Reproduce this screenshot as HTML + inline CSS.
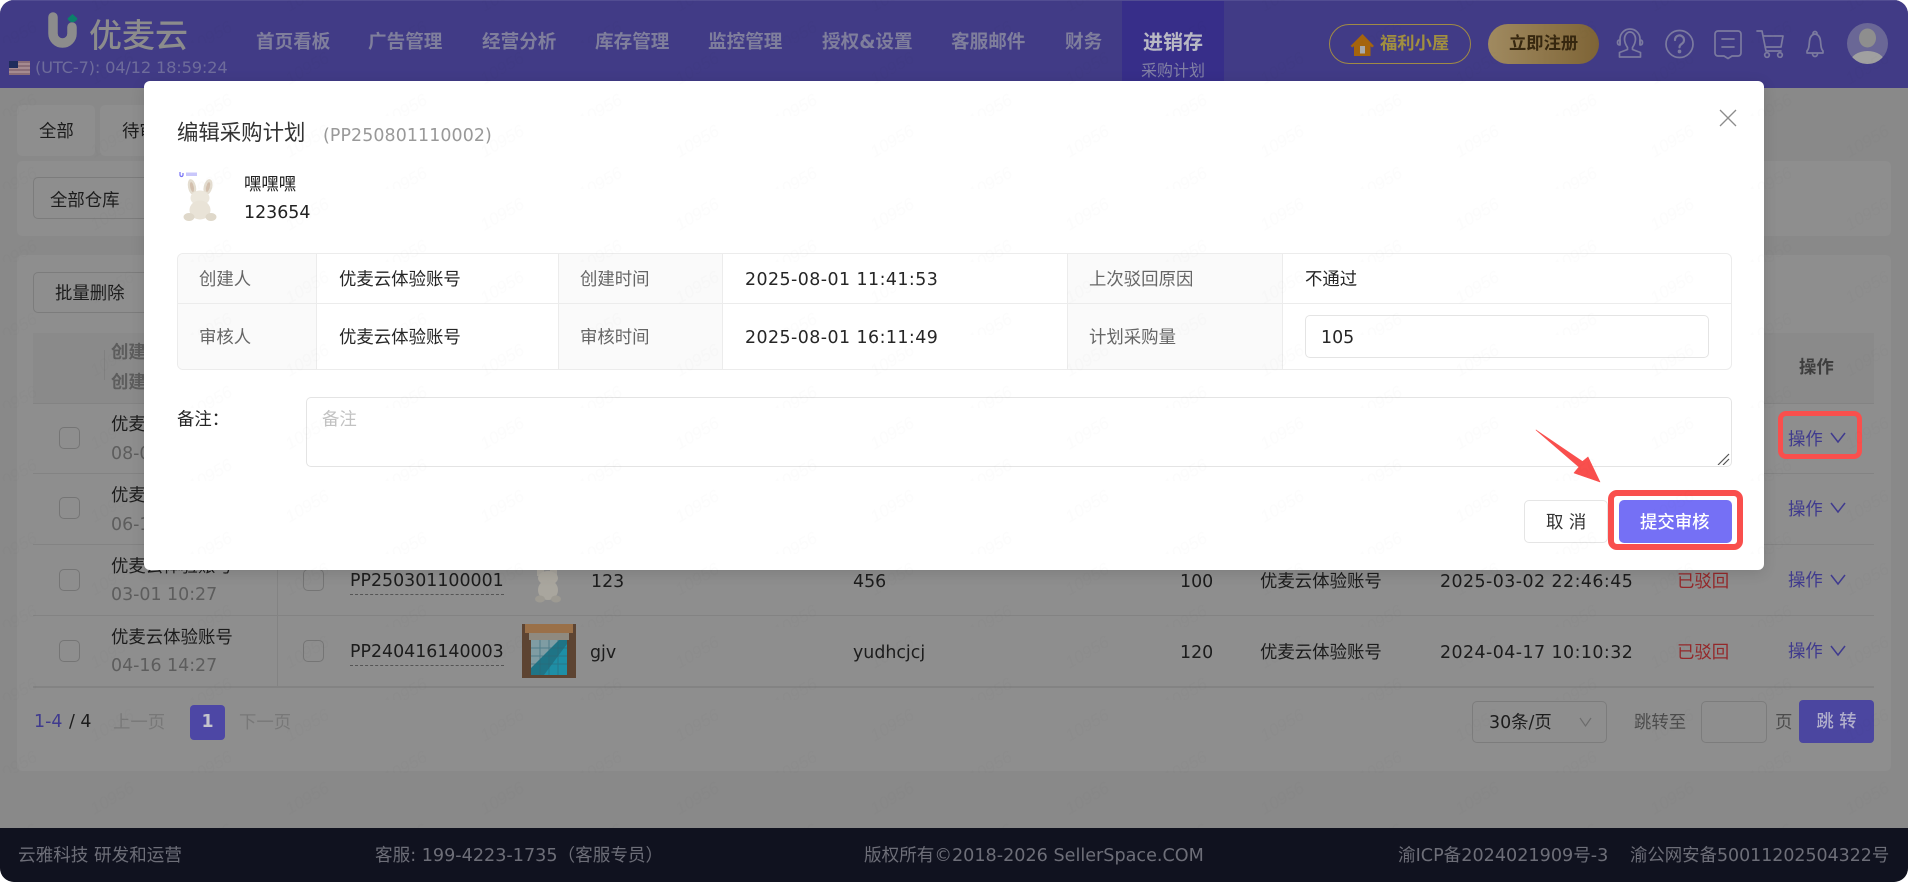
<!DOCTYPE html>
<html lang="zh"><head><meta charset="utf-8"><title>编辑采购计划</title>
<style>
*{box-sizing:border-box}
html,body{margin:0;padding:0;width:1908px;height:882px;overflow:hidden;background:#fff}
body{font-family:"DejaVu Sans","Noto Sans CJK SC",sans-serif;font-size:17.4px;color:#1c1c1c}
#app{position:absolute;left:0;top:0;width:1908px;height:882px;border-radius:14px;overflow:hidden;background:#898989}
.t{position:absolute;white-space:nowrap;line-height:30px;height:30px}
.b{position:absolute}
#hd{position:absolute;left:0;top:0;width:1908px;height:88px;background:#413b86;border-top:1px solid #524d92}
#ft{position:absolute;left:0;top:828px;width:1908px;height:54px;background:#10121f}
.nav{color:#7f7e9c;font-size:18.6px;font-weight:700;top:27px}
.ft{color:#6d6e78;font-size:17.6px;top:13px}
.card{position:absolute;background:#8e8e8e;border-radius:5px}
.bx{position:absolute;border:1px solid #7c7c7c;border-radius:5px}
.line{position:absolute;height:1px;background:#838383;left:33px;width:1841px}
.ck{position:absolute;width:21px;height:22px;border:1px solid #757575;border-radius:5px}
.g{color:#5d5d5d}
.r{color:#94282a}
.p{color:#3f3a8e}
.pp{border-bottom:1px dashed #555;line-height:32px;height:30px}
#m{position:absolute;left:144px;top:81px;width:1620px;height:489px;background:#fff;border-radius:6px;box-shadow:0 3px 14px rgba(0,0,0,.12)}
#m .t{color:#262626}
.cell{position:absolute;background:#fafafa;border-right:1px solid #ececec}
.lb{color:#666!important}
.in{position:absolute;background:#fff;border:1px solid #e4e4e4;border-radius:5px}
#wm{position:absolute;left:0;top:0;pointer-events:none}
</style></head><body>
<div id="app">

<!-- header -->
<div id="hd">
 <svg class="b" style="left:44px;top:10px" width="40" height="40" viewBox="44 11 40 40">
  <path d="M53 17V33.5a9.5 9.5 0 0 0 19 0V27" fill="none" stroke="#8c8c8c" stroke-width="9.5" stroke-linecap="round"/>
  <path d="M72.500 14l5 4.500a5.200 5.200 0 0 1-10 0z" fill="#0b7f6a"/>
 </svg>
 <div class="t" style="left:89px;top:20px;font-size:33px;font-weight:500;color:#8c8c8c;line-height:30px">优麦云</div>
 <svg class="b" style="left:9px;top:60px" width="21" height="14" viewBox="0 0 21 14">
  <rect width="21" height="14" fill="#8a6d78"/><rect y="2" width="21" height="2" fill="#a58a90"/><rect y="6" width="21" height="2" fill="#a58a90"/><rect y="10" width="21" height="2" fill="#a58a90"/><rect width="9" height="7" fill="#1f2c5c"/>
 </svg>
 <div class="t" style="left:35px;top:52px;font-size:16.3px;color:#6e6c9b;letter-spacing:-.2px">(UTC-7): 04/12 18:59:24</div>

 <div class="t nav" style="left:256px">首页看板</div>
 <div class="t nav" style="left:368px">广告管理</div>
 <div class="t nav" style="left:482px">经营分析</div>
 <div class="t nav" style="left:595px">库存管理</div>
 <div class="t nav" style="left:708px">监控管理</div>
 <div class="t nav" style="left:822px">授权&amp;设置</div>
 <div class="t nav" style="left:951px">客服邮件</div>
 <div class="t nav" style="left:1065px">财务</div>
 <div class="b" style="left:1122px;top:0;width:102px;height:87px;background:#372e89"></div>
 <div class="t" style="left:1143px;top:26px;font-size:20px;font-weight:700;color:#b9b9c4">进销存</div>
 <div class="t" style="left:1141px;top:55px;font-size:16px;color:#8280a4">采购计划</div>

 <div class="b" style="left:1329px;top:23px;width:142px;height:40px;border:1px solid #a08a45;border-radius:20px"></div>
 <svg class="b" style="left:1350px;top:32px" width="25" height="24" viewBox="0 0 25 24">
  <path d="M12.500 1L24 13l-2 1.500-1.500-1.500V23H4V13l-1.500 1.500L.5 13z" fill="#a5640c"/><rect x="10" y="13" width="5" height="7.500" fill="#a9a9a9"/>
 </svg>
 <div class="t" style="left:1380px;top:28px;font-size:17.3px;font-weight:700;color:#a18f3f">福利小屋</div>
 <div class="b" style="left:1488px;top:23px;width:111px;height:40px;border-radius:20px;background:linear-gradient(90deg,#a08a60,#7e6436)"></div>
 <div class="t" style="left:1509px;top:28px;font-size:17.3px;font-weight:700;color:#36270f">立即注册</div>

 <svg class="b" style="left:1610px;top:20px" width="240" height="44" viewBox="1610 21 240 44" fill="none" stroke="#7b7a9f" stroke-width="1.700" stroke-linecap="round" stroke-linejoin="round">
  <path d="M1620 44V39a10 10 0 0 1 20 0v5"/><path d="M1620 40c-2 0-2.500 1-2.500 2.500s.5 2.500 2.500 2.500zM1640 40c2 0 2.500 1 2.500 2.500s-.5 2.500-2.500 2.500z"/>
  <path d="M1624.500 39a5.500 7 0 0 1 11 0c0 4-2 7-3 8.500v2l8 3V57h-21v-4.500l8-3v-2c-1-1.500-3-4.500-3-8.500z"/>
  <circle cx="1679.500" cy="44" r="13.500"/><path d="M1675 40a4.500 4.500 0 1 1 7 3.700c-1.500 1-2.500 1.800-2.500 3.600" stroke-width="2.200"/><circle cx="1679.500" cy="51.500" r="1" fill="#7b7a9f"/>
  <path d="M1718 31h20a3 3 0 0 1 3 3v19a3 3 0 0 1-3 3h-6l-4 2.500-4-2.500h-6a3 3 0 0 1-3-3V34a3 3 0 0 1 3-3z"/><path d="M1722 39h12M1722 47h12"/>
  <path d="M1757 31h5l4 20h15M1763 36h20l-2 11h-16"/><circle cx="1767" cy="55" r="2.300"/><circle cx="1780" cy="55" r="2.300"/>
  <path d="M1807 53v-2c2-2 2-5 2.500-10 .4-4 2-6.500 5.500-7 3.500.5 5.100 3 5.500 7 .5 5 .5 8 2.500 10v2z"/><path d="M1812.500 53.500c0 4 5 4 5 0M1813 33.500a2 2 0 0 1 4 0"/>
 </svg>
 <svg class="b" style="left:1847px;top:22px" width="41" height="41" viewBox="0 0 41 41">
  <defs><clipPath id="av"><circle cx="20.500" cy="20.500" r="20.500"/></clipPath></defs>
  <g clip-path="url(#av)"><rect width="41" height="41" fill="#6a6796"/><ellipse cx="20.500" cy="15" rx="8.500" ry="9.500" fill="#8e8e8e"/><ellipse cx="20.500" cy="39" rx="17" ry="11" fill="#a0a0a0"/></g>
 </svg>
</div>

<!-- page behind overlay -->
<div class="card" style="left:17px;top:105px;width:78px;height:51px"></div>
<div class="card" style="left:100px;top:105px;width:80px;height:51px"></div>
<div class="t" style="left:39px;top:117px">全部</div>
<div class="t" style="left:122px;top:117px">待审</div>
<div class="card" style="left:17px;top:161px;width:1874px;height:75px"></div>
<div class="bx" style="left:33px;top:177px;width:140px;height:42px"></div>
<div class="t" style="left:50px;top:186px">全部仓库</div>
<div class="card" style="left:17px;top:255px;width:1874px;height:516px"></div>
<div class="bx" style="left:33px;top:272px;width:120px;height:41px"></div>
<div class="t" style="left:55px;top:279px">批量删除</div>

<div class="b" style="left:33px;top:333px;width:1841px;height:70px;background:#8a8a8a"></div>
<div class="b" style="left:104px;top:350px;width:1px;height:30px;background:#808080"></div>
<div class="t g" style="left:111px;top:338px;font-weight:700">创建人</div>
<div class="t g" style="left:111px;top:368px;font-weight:700">创建时间</div>
<div class="t" style="left:1799px;top:353px;font-weight:700;color:#3e3e3e">操作</div>

<div class="line" style="top:403px"></div>
<div class="line" style="top:473px"></div>
<div class="line" style="top:544px"></div>
<div class="line" style="top:615px"></div>
<div class="line" style="top:686px;height:2px"></div>
<div class="b" style="left:277px;top:403px;width:1px;height:284px;background:#838383"></div>

<div class="ck" style="left:59px;top:427px"></div><div class="t" style="left:111px;top:410px">优麦云体验账号</div><div class="t g" style="left:111px;top:439px">08-01 11:41</div>
<div class="ck" style="left:59px;top:497px"></div><div class="t" style="left:111px;top:481px">优麦云体验账号</div><div class="t g" style="left:111px;top:510px">06-10 09:12</div>
<div class="ck" style="left:59px;top:569px"></div><div class="t" style="left:111px;top:552px">优麦云体验账号</div><div class="t g" style="left:111px;top:580px">03-01 10:27</div>
<div class="ck" style="left:59px;top:640px"></div><div class="t" style="left:111px;top:623px">优麦云体验账号</div><div class="t g" style="left:111px;top:651px">04-16 14:27</div>

<div class="ck" style="left:303px;top:569px"></div>
<div class="t pp" style="left:350px;top:565px">PP250301100001</div>
<svg class="b" style="left:530px;top:570px" width="38" height="33" viewBox="0 0 38 33"><rect x="7" y="0" width="7" height="6" fill="#a5a29b"/><rect x="20" y="0" width="7" height="6" fill="#a5a29b"/><ellipse cx="18" cy="8" rx="10" ry="7" fill="#aaa79f"/><ellipse cx="18" cy="20" rx="10" ry="10" fill="#a9a69e"/><ellipse cx="10" cy="29" rx="5" ry="3.500" fill="#9d9a92"/><ellipse cx="26" cy="29" rx="5" ry="3.500" fill="#9d9a92"/></svg>
<div class="t" style="left:591px;top:567px">123</div>
<div class="t" style="left:853px;top:567px">456</div>
<div class="t" style="left:1180px;top:567px">100</div>
<div class="t" style="left:1260px;top:567px">优麦云体验账号</div>
<div class="t" style="left:1440px;top:567px;letter-spacing:.45px">2025-03-02 22:46:45</div>
<div class="t r" style="left:1677px;top:567px">已驳回</div>

<div class="ck" style="left:303px;top:640px"></div>
<div class="t pp" style="left:350px;top:636px">PP240416140003</div>
<svg class="b" style="left:522px;top:624px" width="54" height="54" viewBox="0 0 54 54">
 <rect width="54" height="54" fill="#5d4432"/><rect x="3" y="0" width="48" height="9" fill="#9a7048"/><rect x="7" y="9" width="40" height="7" fill="#8f8a7f"/>
 <rect x="9" y="16" width="36" height="35" fill="#1f7486"/><path d="M9 16h28L9 44z" fill="#7f9ca3"/><path d="M22 51L45 20v31z" fill="#1e8fa6"/>
 <path d="M9 24H45M9 32H45M9 40H45M18 16V51M27 16V51M36 16V51" stroke="#2f6574" stroke-width="1" opacity=".55"/>
</svg>
<div class="t" style="left:590px;top:638px">gjv</div>
<div class="t" style="left:853px;top:638px">yudhcjcj</div>
<div class="t" style="left:1180px;top:638px">120</div>
<div class="t" style="left:1260px;top:638px">优麦云体验账号</div>
<div class="t" style="left:1440px;top:638px;letter-spacing:.45px">2024-04-17 10:10:32</div>
<div class="t r" style="left:1677px;top:638px">已驳回</div>

<div class="t p" style="left:1788px;top:425px">操作</div>
<div class="t p" style="left:1788px;top:495px">操作</div>
<div class="t p" style="left:1788px;top:566px">操作</div>
<div class="t p" style="left:1788px;top:637px">操作</div>
<svg class="b" style="left:1828px;top:425px" width="20" height="240" viewBox="0 0 20 240" fill="none" stroke="#3f3a8e" stroke-width="1.500">
 <path d="M3 8l7 9 7-9M3 78l7 9 7-9M3 150l7 9 7-9M3 221l7 9 7-9"/>
</svg>

<div class="t" style="left:34px;top:707px;color:#3f3a8e">1-4</div>
<div class="t" style="left:69px;top:707px">/ 4</div>
<div class="t" style="left:113px;top:708px;color:#787878">上一页</div>
<div class="b" style="left:190px;top:705px;width:35px;height:35px;border-radius:4px;background:#4d47a5"></div>
<div class="t" style="left:190px;top:707px;width:35px;text-align:center;color:#c4c4cc;font-weight:700">1</div>
<div class="t" style="left:239px;top:708px;color:#787878">下一页</div>

<div class="bx" style="left:1472px;top:701px;width:135px;height:42px"></div>
<div class="t" style="left:1489px;top:708px">30条/页</div>
<svg class="b" style="left:1578px;top:716px" width="15" height="12" viewBox="0 0 15 12"><path d="M2 2l5.500 8L13 2" fill="none" stroke="#6c6c6c" stroke-width="1.200"/></svg>
<div class="t" style="left:1634px;top:708px;color:#4c4c4c">跳转至</div>
<div class="bx" style="left:1701px;top:701px;width:66px;height:42px"></div>
<div class="t" style="left:1775px;top:708px;color:#4c4c4c">页</div>
<div class="b" style="left:1799px;top:700px;width:75px;height:43px;border-radius:4px;background:#4b46a0"></div>
<div class="t" style="left:1799px;top:707px;width:75px;text-align:center;color:#b0aecb;font-weight:500">跳 转</div>

<!-- footer -->
<div id="ft">
 <div class="t ft" style="left:18px">云雅科技 研发和运营</div>
 <div class="t ft" style="left:375px">客服: 199-4223-1735（客服专员）</div>
 <div class="t ft" style="left:864px">版权所有©2018-2026 SellerSpace.COM</div>
 <div class="t ft" style="left:1398px">渝ICP备2024021909号-3</div>
 <div class="t ft" style="left:1630px;font-size:17.4px">渝公网安备50011202504322号</div>
</div>

<!-- red box around action -->
<div class="b" style="left:1778px;top:411px;width:84px;height:48px;border:5.500px solid #f94f4d;border-radius:8px"></div>

<!-- modal (coords offset by -144,-81) -->
<div id="m">
 <div class="t" style="left:33px;top:38px;font-size:21.4px;color:#333">编辑采购计划</div>
 <div class="t" style="left:179px;top:40px;font-size:17.4px;color:#999;letter-spacing:.1px">(PP250801110002)</div>
 <svg class="b" style="left:1575px;top:28px" width="18" height="18" viewBox="0 0 18 18"><path d="M1 1l16 16M17 1L1 17" stroke="#8c8c8c" stroke-width="1.300"/></svg>

 <svg class="b" style="left:34px;top:89px" width="44" height="54" viewBox="0 0 44 54">
  <path d="M2 2v3a1.500 1.500 0 0 0 3 0V3" fill="none" stroke="#7570f5" stroke-width="1.200"/><rect x="8" y="2.500" width="11" height="3.500" fill="#c9c7fb"/>
  <ellipse cx="14" cy="17" rx="4" ry="8" transform="rotate(-12 14 17)" fill="#e4ddd0"/><ellipse cx="30" cy="17" rx="4.300" ry="8" transform="rotate(14 30 17)" fill="#e4ddd0"/>
  <ellipse cx="14" cy="17" rx="1.800" ry="5" transform="rotate(-12 14 17)" fill="#d3c0ae"/><ellipse cx="30" cy="17" rx="1.800" ry="5" transform="rotate(14 30 17)" fill="#d3c0ae"/>
  <ellipse cx="22" cy="28" rx="9.500" ry="7.500" fill="#ece7dc"/><ellipse cx="22" cy="40" rx="10.500" ry="9.500" fill="#e9e3d7"/>
  <ellipse cx="11" cy="47" rx="5.500" ry="4" fill="#dfd8ca"/><ellipse cx="33" cy="47" rx="5.500" ry="4" fill="#dfd8ca"/>
 </svg>
 <div class="t" style="left:100px;top:89px;color:#222">嘿嘿嘿</div>
 <div class="t" style="left:100px;top:117px;color:#222">123654</div>

 <!-- info table -->
 <div class="b" style="left:33px;top:172px;width:1555px;height:117px;border:1px solid #ececec;border-radius:6px;overflow:hidden">
  <div class="cell" style="left:0;top:0;width:139px;height:115px"></div>
  <div class="cell" style="left:380px;top:0;width:165px;height:115px;border-left:1px solid #ececec"></div>
  <div class="cell" style="left:889px;top:0;width:216px;height:115px;border-left:1px solid #ececec"></div>
  <div class="b" style="left:0;top:49px;width:1553px;height:1px;background:#ececec"></div>
 </div>
 <div class="t lb" style="left:55px;top:184px">创建人</div>
 <div class="t" style="left:195px;top:184px">优麦云体验账号</div>
 <div class="t lb" style="left:436px;top:184px">创建时间</div>
 <div class="t" style="left:601px;top:184px;letter-spacing:.45px">2025-08-01 11:41:53</div>
 <div class="t lb" style="left:945px;top:184px">上次驳回原因</div>
 <div class="t" style="left:1161px;top:184px">不通过</div>
 <div class="t lb" style="left:55px;top:242px">审核人</div>
 <div class="t" style="left:195px;top:242px">优麦云体验账号</div>
 <div class="t lb" style="left:436px;top:242px">审核时间</div>
 <div class="t" style="left:601px;top:242px;letter-spacing:.45px">2025-08-01 16:11:49</div>
 <div class="t lb" style="left:945px;top:242px">计划采购量</div>
 <div class="in" style="left:1161px;top:234px;width:404px;height:43px"></div>
 <div class="t" style="left:1177px;top:242px">105</div>

 <div class="t" style="left:33px;top:324px">备注：</div>
 <div class="in" style="left:162px;top:316px;width:1426px;height:70px"></div>
 <div class="t" style="left:178px;top:324px;color:#c2c2c2">备注</div>
 <svg class="b" style="left:1573px;top:372px" width="13" height="12" viewBox="0 0 13 12"><path d="M12 1L1 12M12 6L6 12" stroke="#555" stroke-width="1.200"/></svg>

 <div class="b" style="left:1380px;top:419px;width:84px;height:43px;background:#fff;border:1px solid #e5e5e5;border-radius:5px"></div>
 <div class="t" style="left:1402px;top:427px;color:#333">取 消</div>
 <div class="b" style="left:1475px;top:419px;width:113px;height:43px;background:#7570f5;border-radius:5px"></div>
 <div class="t" style="left:1496px;top:427px;font-weight:500"><span style="color:#fff">提交审核</span></div>
 <div class="b" style="left:1464px;top:409px;width:135px;height:60px;border:6px solid #f94f4d;border-radius:9px"></div>
 <svg class="b" style="left:1389px;top:346px" width="70" height="58" viewBox="1533 427 70 58"><path d="M1536 430L1582.500 461.500 1588 457 1600 482 1574 473 1579 467z" fill="#f94f4d" stroke="#f94f4d" stroke-linejoin="round" stroke-width=".6"/></svg>
</div>

<!-- watermark -->
<svg id="wm" width="1908" height="882" xmlns="http://www.w3.org/2000/svg">
 <defs><pattern id="w" x="213" y="-30" width="195" height="73" patternUnits="userSpaceOnUse">
  <text x="97" y="30" transform="rotate(-30 97 30)" text-anchor="middle" font-family="Liberation Sans,sans-serif" font-style="italic" font-size="17" fill="#000" fill-opacity=".012">10956</text>
  <text x="0" y="72" transform="rotate(-30 0 72)" text-anchor="middle" font-family="Liberation Sans,sans-serif" font-style="italic" font-size="17" fill="#000" fill-opacity=".012">10956</text>
  <text x="195" y="72" transform="rotate(-30 195 72)" text-anchor="middle" font-family="Liberation Sans,sans-serif" font-style="italic" font-size="17" fill="#000" fill-opacity=".012">10956</text>
 </pattern></defs>
 <rect width="1908" height="882" fill="url(#w)"/>
</svg>
</div>
</body></html>
